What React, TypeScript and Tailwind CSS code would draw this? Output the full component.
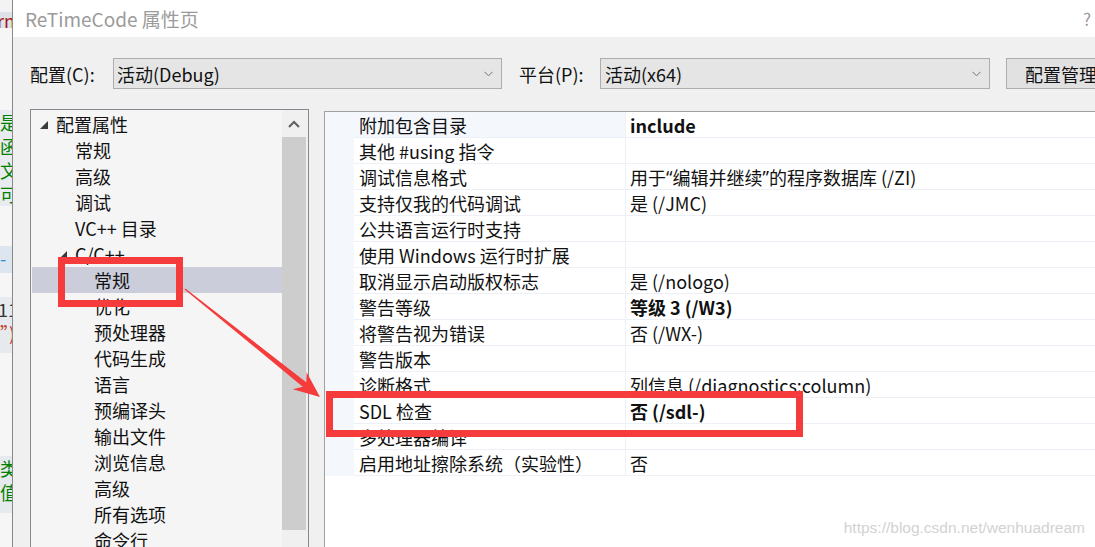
import React from 'react';

const Tri = () => (
  <svg width="8" height="8" viewBox="0 0 8 8">
    <polygon points="8,0 8,8 0,8" fill="#3a3a3a" />
  </svg>
);

const Chev = () => (
  <svg width="9" height="6" viewBox="0 0 9 6">
    <polyline points="0.5,0.8 4.5,4.8 8.5,0.8" fill="none" stroke="#707070" strokeWidth="1" />
  </svg>
);

const tree: { t: string; l: number; tri?: boolean; sel?: boolean }[] = [
  { t: '配置属性', l: 0, tri: true },
  { t: '常规', l: 1 },
  { t: '高级', l: 1 },
  { t: '调试', l: 1 },
  { t: 'VC++ 目录', l: 1 },
  { t: 'C/C++', l: 1, tri: true },
  { t: '常规', l: 2, sel: true },
  { t: '优化', l: 2 },
  { t: '预处理器', l: 2 },
  { t: '代码生成', l: 2 },
  { t: '语言', l: 2 },
  { t: '预编译头', l: 2 },
  { t: '输出文件', l: 2 },
  { t: '浏览信息', l: 2 },
  { t: '高级', l: 2 },
  { t: '所有选项', l: 2 },
  { t: '命令行', l: 2 },
];

const pads = ['pl-[8px]', 'pl-[27px]', 'pl-[46px]'];

const Q = ({ c }: { c: string }) => <span className="font-['Noto_Sans',sans-serif]">{c}</span>;

const rows: { n: string; v: React.ReactNode; b?: boolean; first?: boolean }[] = [
  { n: '附加包含目录', v: 'include', b: true, first: true },
  { n: '其他 #using 指令', v: '' },
  {
    n: '调试信息格式',
    v: (
      <>
        用于<Q c="“" />编辑并继续<Q c="”" />的程序数据库 (/ZI)
      </>
    ),
  },
  { n: '支持仅我的代码调试', v: '是 (/JMC)' },
  { n: '公共语言运行时支持', v: '' },
  { n: '使用 Windows 运行时扩展', v: '' },
  { n: '取消显示启动版权标志', v: '是 (/nologo)' },
  { n: '警告等级', v: '等级 3 (/W3)', b: true },
  { n: '将警告视为错误', v: '否 (/WX-)' },
  { n: '警告版本', v: '' },
  { n: '诊断格式', v: '列信息 (/diagnostics:column)' },
  { n: 'SDL 检查', v: '否 (/sdl-)', b: true },
  { n: '多处理器编译', v: '' },
  { n: '启用地址擦除系统（实验性）', v: '否' },
];

function LeftStrip() {
  return (
    <div className="w-[12px] shrink-0 flex flex-col overflow-hidden bg-white whitespace-nowrap text-[18px] leading-[24px]">
      <div className="h-[12px] bg-[#f3f3f3]" />
      <div className="h-[16px] bg-[#dde1e8] text-[#a31515] leading-[16px] -ml-[3px]">rn</div>
      <div className="h-[82px] bg-[#f6f6f6]" />
      <div className="h-[96px] bg-[#e8ebef] text-[#008000] flex flex-col">
        <div>是一</div>
        <div>函数</div>
        <div>文件</div>
        <div>可多</div>
      </div>
      <div className="h-[40px] bg-[#f6f6f6]" />
      <div className="h-[27px] bg-[#dde5ee] text-[#2f8fd0]">-</div>
      <div className="h-[24px] bg-[#f6f6f6]" />
      <div className="h-[56px] bg-[#e6e9ed] flex flex-col">
        <div className="text-[#333] -ml-[2px]">11</div>
        <div className="text-[#c0392b]">”)</div>
      </div>
      <div className="h-[103px] bg-[#f6f6f6]" />
      <div className="h-[57px] bg-[#e6e9ed] text-[#008000] flex flex-col">
        <div>类型</div>
        <div>值可</div>
      </div>
      <div className="flex-1 bg-[#f6f6f6]" />
    </div>
  );
}

export default function App() {
  return (
    <div className="w-[1095px] h-[547px] overflow-hidden relative flex bg-white text-[#111] font-['Noto_Sans_CJK_SC','Noto_Sans',sans-serif]">
      <LeftStrip />
      <div className="flex-1 min-w-0 flex flex-col border-l border-[#8a8a8a]">
        {/* title bar */}
        <div className="h-[37px] shrink-0 bg-white flex items-center justify-between pl-[12px] pr-[4px]">
          <span className="text-[19px] leading-none text-[#9b9b9b]">ReTimeCode 属性页</span>
          <span className="text-[17px] leading-none text-[#9b9b9b]">?</span>
        </div>
        {/* body */}
        <div className="flex-1 min-h-0 bg-[#f0f0f0] flex flex-col">
          <div className="mt-[21px] h-[31px] shrink-0 flex items-center pl-[17px] text-[18px] leading-none whitespace-nowrap">
            <div className="w-[83px] shrink-0">配置(C):</div>
            <div className="w-[389px] h-[31px] shrink-0 border border-[#adadad] bg-[#e5e5e5] flex items-center justify-between pl-[3px] pr-[8px]">
              <span>活动(Debug)</span>
              <Chev />
            </div>
            <div className="ml-[17px] w-[81px] shrink-0">平台(P):</div>
            <div className="w-[390px] h-[31px] shrink-0 border border-[#adadad] bg-[#e5e5e5] flex items-center justify-between pl-[4px] pr-[8px]">
              <span>活动(x64)</span>
              <Chev />
            </div>
            <div className="ml-[16px] w-[120px] h-[31px] shrink-0 border border-[#adadad] bg-[#e1e1e1] flex items-center pl-[18px]">
              配置管理器
            </div>
          </div>

          <div className="mt-[20px] flex-1 min-h-0 flex items-start pl-[17px]">
            {/* tree */}
            <div className="w-[279px] h-[460px] shrink-0 border border-[#828790] bg-[#f5f5f5] flex">
              <div className="flex-1 min-w-0 pt-[1px] pl-[1px] flex flex-col text-[18px] leading-none whitespace-nowrap">
                {tree.map((it, i) => (
                  <div
                    key={i}
                    className={`h-[26px] shrink-0 flex items-center ${pads[it.l]} ${it.sel ? 'bg-[#cbcdda]' : ''}`}
                  >
                    <div className="w-[16px] shrink-0 flex items-center pt-[1px]">{it.tri ? <Tri /> : null}</div>
                    <span>{it.t}</span>
                  </div>
                ))}
              </div>
              <div className="w-[26px] shrink-0 bg-[#f0f0f0] flex flex-col">
                <div className="h-[27px] flex items-center justify-center pr-[2px]">
                  <svg width="12" height="8" viewBox="0 0 12 8">
                    <polyline points="1,7 6,2 11,7" fill="none" stroke="#606060" strokeWidth="2" />
                  </svg>
                </div>
                <div className="w-[24px] h-[393px] bg-[#cdcdcd]" />
              </div>
            </div>

            {/* property grid */}
            <div className="ml-[15px] mt-[2px] flex-1 min-w-0 h-[460px] border-l border-t border-[#a0a0a0] bg-white">
              <div className="flex">
                <div className="w-[29px] shrink-0 bg-[#f4f7fc]" />
                <div className="flex-1 min-w-0 bg-[#f4f7fc] flex flex-col text-[18px] leading-none whitespace-nowrap">
                  {rows.map((r, i) => (
                    <div key={i} className="h-[26px] flex">
                      <div
                        className={`w-[272px] shrink-0 flex items-center pl-[5px] border-b border-r border-[#edf0f6] ${r.first ? 'bg-[#f4f7fc]' : 'bg-white'}`}
                      >
                        {r.n}
                      </div>
                      <div
                        className={`flex-1 flex items-center pl-[4px] bg-white border-b border-[#edf0f6] ${r.b ? 'font-bold' : ''}`}
                      >
                        {r.v}
                      </div>
                    </div>
                  ))}
                </div>
              </div>
            </div>
          </div>
        </div>
      </div>

      {/* annotations */}
      <div className="absolute left-[58px] top-[257px] w-[125px] h-[50px] border-[7px] border-[#f53b3b]" />
      <div className="absolute left-[326px] top-[391px] w-[477px] h-[46px] border-[7px] border-[#f53b3b]" />
      <svg className="absolute left-0 top-0 pointer-events-none" width="1095" height="547" viewBox="0 0 1095 547">
        <polygon
          points="184.6,289.5 302.7,386.7 292.8,389.3 320,397 306.6,372.2 306.2,382.3 185.4,288.5"
          fill="#f53b3b"
        />
      </svg>

      <div className="absolute right-[10px] top-[520px] text-[15.5px] leading-none text-[#d2d2d2] font-['Liberation_Sans',Arial,sans-serif]">
        https://blog.csdn.net/wenhuadream
      </div>
    </div>
  );
}
